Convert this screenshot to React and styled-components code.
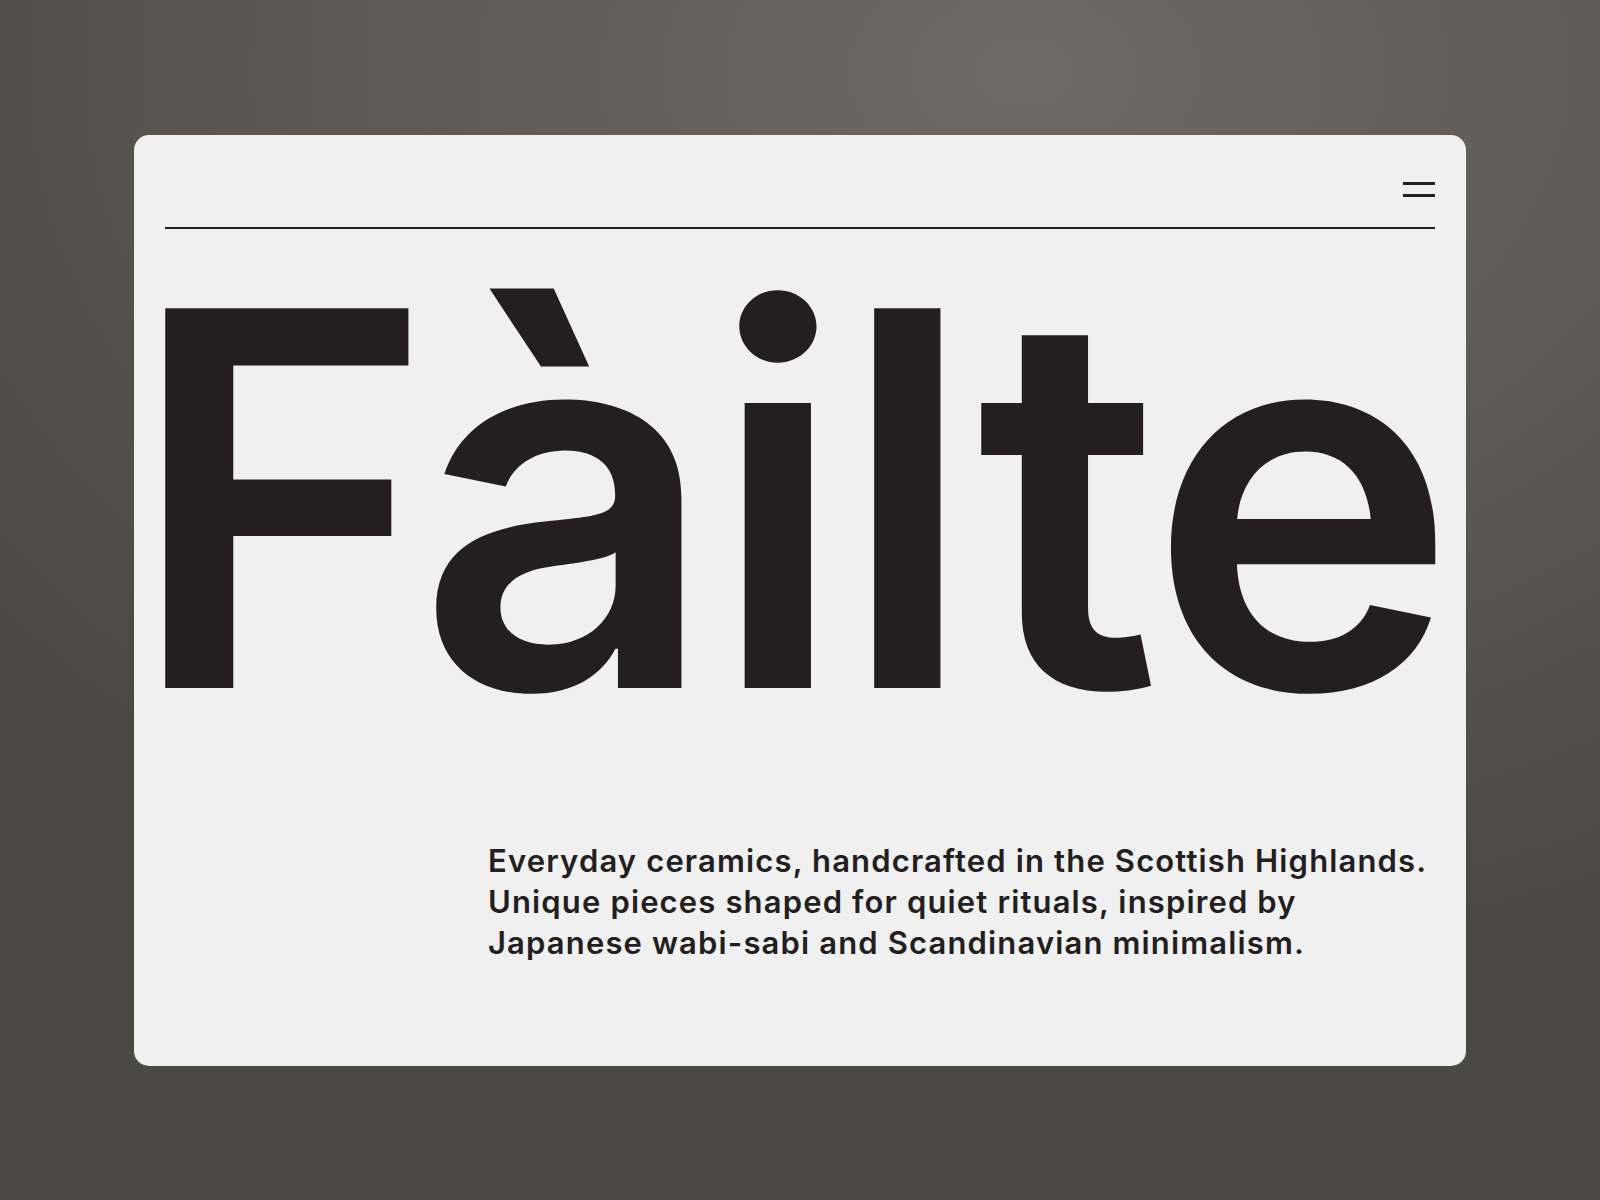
import React from 'react'
import styled, { createGlobalStyle } from 'styled-components'

const GlobalStyle = createGlobalStyle`
html, body {
  margin:0;
  padding:0;
  height:100%;
}
body {
  font-family:Inter, "Noto Sans", sans-serif;
  overflow:hidden;
}
#root {
  height:100%;
}
`

const Page = styled.div`
width:100%;
height:100%;
display:flex;
align-items:center;
justify-content:center;
background:radial-gradient(ellipse 80% 75% at 64% 6%, #6e6a63 0%, #5f5c55 45%, #4b4944 100%);
`

const Card = styled.div`
width:1332px;
height:931px;
box-sizing:border-box;
background-color:#f0f0f0;
border-radius:15px;
padding:47px 31px 0 31px;
display:flex;
flex-direction:column;
color:#231f20;
`

const TopBar = styled.header`
display:flex;
justify-content:flex-end;
align-items:flex-start;
height:45px;
border-bottom:2px solid #231f20;
`

const Burger = styled.button`
width:32px;
height:15px;
padding:0;
border:none;
background:none;
display:flex;
flex-direction:column;
justify-content:space-between;
cursor:pointer;
`

const BurgerBar = styled.span`
display:block;
width:100%;
height:3px;
background-color:#231f20;
`

const Title = styled.h1`
margin:8px 0 0 -38px;
font-family:Inter, sans-serif;
font-weight:600;
font-size:522px;
line-height:1;
letter-spacing:-0.0136em;
white-space:nowrap;
`

const Intro = styled.p`
margin:81px 0 0 323px;
font-family:Inter, sans-serif;
font-weight:600;
font-size:31px;
line-height:41px;
letter-spacing:0.037em;
white-space:nowrap;
`

const App = () => {
  return (
    <>
      <GlobalStyle />
      <Page>
        <Card>
          <TopBar>
            <Burger aria-label="Menu">
              <BurgerBar />
              <BurgerBar />
            </Burger>
          </TopBar>
          <Title>Fàilte</Title>
          <Intro>
            Everyday ceramics, handcrafted in the Scottish Highlands.<br />
            Unique pieces shaped for quiet rituals, inspired by<br />
            Japanese wabi-sabi and Scandinavian minimalism.
          </Intro>
        </Card>
      </Page>
    </>
  )
}

export default App
